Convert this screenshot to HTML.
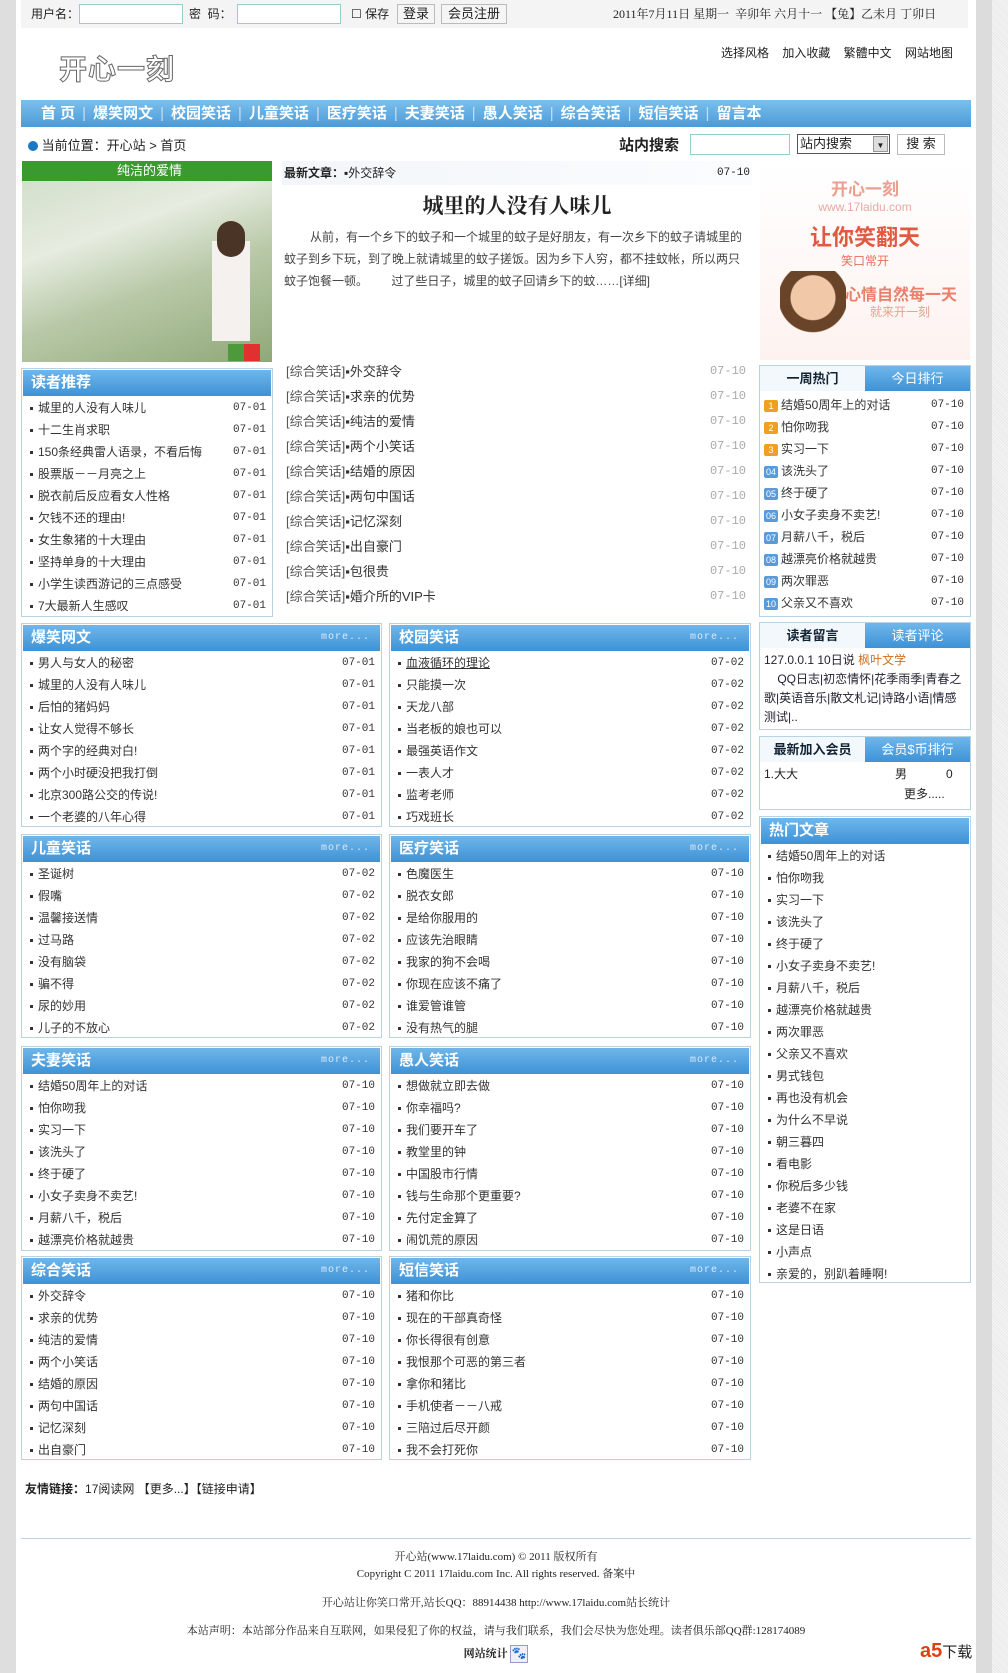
<!DOCTYPE html>
<html><head><meta charset="utf-8">
<style>
*{margin:0;padding:0;box-sizing:border-box}
body{width:1008px;height:1673px;position:relative;background:#fff;font-family:"Liberation Sans","Noto Sans CJK SC","WenQuanYi Zen Hei",sans-serif;font-size:12px;color:#222;overflow:hidden}
.a{position:absolute}
.lg{left:0;top:0;width:16px;height:1673px;background:#dedede}
.rg{left:976px;top:0;width:16px;height:1673px;background:#dcdcdc}
.sb{left:992px;top:0;width:16px;height:1673px;background:repeating-linear-gradient(45deg,#e8e8e8 0 1px,#f6f6f6 1px 2px)}
.top{left:21px;top:0;width:947px;height:28px;background:#f4f4f4;font-size:12px;line-height:28px}
input.t{position:absolute;height:20px;border:1px solid #9cc;background:#fff}
.btn{position:absolute;height:20px;border:1px solid #bbb;background:#f5f5f5;font-size:13px;line-height:18px;text-align:center}
.nav{left:21px;top:100px;width:950px;height:27px;background:linear-gradient(#7cc0ec,#4a9ad8);color:#fff;font-weight:bold;font-size:15px;line-height:27px;padding-left:20px;white-space:nowrap}
.nav span{color:#cde;font-weight:normal;margin:0 7px}
.box{position:absolute;border:1px solid #b9d4e0;background:#fff}
.hd{height:26px;margin:1px;background:linear-gradient(#70b6ea,#3d92d6);color:#fff;font-weight:bold;font-size:15px;line-height:26px;padding-left:8px;position:relative}
.hd i{position:absolute;right:10px;top:0;font-style:normal;font-weight:normal;font-size:10px;color:#dbeaf6;font-family:"Liberation Mono",monospace;letter-spacing:1px}
ul{list-style:none}
li{height:22px;line-height:22px;position:relative;padding-left:8px;white-space:nowrap;color:#333}
li b{font-weight:normal;position:absolute;right:6px;top:0;font-family:"Liberation Mono",monospace;font-size:11px;color:#333}
li:before{content:"";display:inline-block;width:3px;height:3px;background:#333;margin-right:5px;vertical-align:middle}
.tabs{height:25px;display:flex;font-size:13px;line-height:25px;text-align:center}
.tabs div{flex:1}
.tabs .on{background:#f3f8fc;font-weight:bold;color:#123}
.tabs .off{background:linear-gradient(#70b6ea,#3d92d6);color:#fff}
.ml li{height:25px;line-height:25px;font-size:13px;padding-left:4px}
.ml li:before{display:none}
.ml li b{color:#aaa;font-size:12px}
.hot li{padding-left:4px}
.hot li:before{display:none}
.hot em{display:inline-block;width:14px;height:12px;font-size:9px;line-height:12px;text-align:center;color:#fff;font-style:normal;margin-right:3px;vertical-align:middle;border-radius:2px}
.f{left:16px;width:960px;text-align:center;font-family:"Liberation Serif","Noto Serif CJK SC",serif;font-size:11px}
</style></head><body>
<div class="a lg"></div><div class="a rg"></div><div class="a sb"></div>
<div class="a top">
 <span class="a" style="left:10px">用户名：</span><input class="t" style="left:58px;top:4px;width:104px">
 <span class="a" style="left:168px">密 &nbsp;码：</span><input class="t" style="left:216px;top:4px;width:104px">
 <span class="a" style="left:330px">☐ 保存</span>
 <div class="btn" style="left:376px;top:4px;width:38px">登录</div>
 <div class="btn" style="left:420px;top:4px;width:66px">会员注册</div>
 <span class="a" style="left:592px;font-family:'Liberation Serif','Noto Serif CJK SC',serif">2011年7月11日 星期一 &nbsp;辛卯年 六月十一 【兔】乙未月 丁卯日</span>
</div>
<div class="a" style="left:59px;top:48px;font-size:28px;color:#fff;-webkit-text-stroke:1px #666;letter-spacing:1px;font-weight:bold">开心一刻</div>
<div class="a" style="left:721px;top:44px;font-size:12px;word-spacing:10px">选择风格 加入收藏 繁體中文 网站地图</div>
<div class="a nav">首 页<span>|</span>爆笑网文<span>|</span>校园笑话<span>|</span>儿童笑话<span>|</span>医疗笑话<span>|</span>夫妻笑话<span>|</span>愚人笑话<span>|</span>综合笑话<span>|</span>短信笑话<span>|</span>留言本</div>
<div class="a" style="left:28px;top:135px;font-size:13px"><span style="display:inline-block;width:10px;height:10px;border-radius:5px;background:#1a78c8;vertical-align:-1px"></span> 当前位置：开心站 &gt; 首页</div>
<div class="a" style="left:619px;top:134px;font-size:15px;font-weight:bold">站内搜索</div>
<input class="t" style="left:690px;top:134px;width:100px;height:21px">
<div class="a" style="left:797px;top:134px;width:93px;height:20px;border:1px solid #555;font-size:13px;line-height:18px;padding-left:2px;background:#fff">站内搜索<span style="position:absolute;right:1px;top:1px;width:15px;height:16px;background:#ddd;border:1px solid #999;font-size:8px;text-align:center">▼</span></div>
<div class="btn" style="left:897px;top:134px;width:48px;height:21px;background:#fff">搜 索</div>

<div class="a" style="left:22px;top:161px;width:250px;height:201px;background:linear-gradient(160deg,#cfdcc6 0%,#e6ece0 35%,#b9c9a8 60%,#8fa878 100%)">
 <div style="height:20px;background:#3a9a30;color:#fff;font-size:13px;line-height:20px;padding-left:95px">纯洁的爱情</div>
 <div class="a" style="left:190px;top:80px;width:38px;height:100px;background:#f4f1ee"></div>
 <div class="a" style="left:195px;top:60px;width:28px;height:36px;border-radius:14px;background:#4a3426"></div>
 <div class="a" style="left:206px;top:183px;width:16px;height:17px;background:#4c9a3c"></div>
 <div class="a" style="left:222px;top:183px;width:16px;height:17px;background:#e23030"></div>
</div>
<div class="box" style="left:21px;top:368px;width:252px;height:249px">
 <div class="hd">读者推荐</div>
 <ul style="padding-top:0"><li>城里的人没有人味儿<b>07-01</b></li><li>十二生肖求职<b>07-01</b></li><li>150条经典雷人语录，不看后悔<b>07-01</b></li><li>股票版－－月亮之上<b>07-01</b></li><li>脱衣前后反应看女人性格<b>07-01</b></li><li>欠钱不还的理由!<b>07-01</b></li><li>女生象猪的十大理由<b>07-01</b></li><li>坚持单身的十大理由<b>07-01</b></li><li>小学生读西游记的三点感受<b>07-01</b></li><li>7大最新人生感叹<b>07-01</b></li></ul>
</div>

<div class="a" style="left:282px;top:161px;width:470px;height:24px;background:linear-gradient(90deg,#f2f6fa,#fbfcfe);line-height:24px;padding-left:2px"><b>最新文章：</b>▪外交辞令<span class="a" style="right:2px;font-family:'Liberation Mono',monospace;font-size:11px">07-10</span></div>
<div class="a" style="left:282px;top:190px;width:470px;text-align:center;font-size:21px;font-weight:bold;font-family:'Liberation Serif','Noto Serif CJK SC',serif">城里的人没有人味儿</div>
<div class="a" style="left:284px;top:226px;width:466px;line-height:22px;color:#444;text-indent:26px">从前，有一个乡下的蚊子和一个城里的蚊子是好朋友，有一次乡下的蚊子请城里的蚊子到乡下玩，到了晚上就请城里的蚊子搓饭。因为乡下人穷，都不挂蚊帐，所以两只蚊子饱餐一顿。 &nbsp; &nbsp; &nbsp; 过了些日子，城里的蚊子回请乡下的蚊……[详细]</div>
<ul class="a ml" style="left:282px;top:359px;width:470px">
<li><span style="color:#555">[综合笑话]</span>▪外交辞令<b>07-10</b></li><li><span style="color:#555">[综合笑话]</span>▪求亲的优势<b>07-10</b></li><li><span style="color:#555">[综合笑话]</span>▪纯洁的爱情<b>07-10</b></li><li><span style="color:#555">[综合笑话]</span>▪两个小笑话<b>07-10</b></li><li><span style="color:#555">[综合笑话]</span>▪结婚的原因<b>07-10</b></li><li><span style="color:#555">[综合笑话]</span>▪两句中国话<b>07-10</b></li><li><span style="color:#555">[综合笑话]</span>▪记忆深刻<b>07-10</b></li><li><span style="color:#555">[综合笑话]</span>▪出自豪门<b>07-10</b></li><li><span style="color:#555">[综合笑话]</span>▪包很贵<b>07-10</b></li><li><span style="color:#555">[综合笑话]</span>▪婚介所的VIP卡<b>07-10</b></li></ul>

<div class="a" style="left:760px;top:161px;width:210px;height:199px;background:linear-gradient(#fff,#fdf2f0);text-align:center;color:#e56a55">
 <div style="font-size:17px;font-weight:bold;margin-top:14px;color:#eaa090">开心一刻</div>
 <div style="font-size:12px;color:#e9a9a0">www.17laidu.com</div>
 <div style="font-size:22px;font-weight:bold;margin-top:6px;color:#e05a40">让你笑翻天</div>
 <div style="font-size:12px;color:#e57060">笑口常开</div>
 <div class="a" style="left:20px;top:110px;width:66px;height:89px;background:radial-gradient(circle at 50% 30%,#f2c9a8 0 22px,#6a4428 23px 34px,transparent 35px)"></div>
 <div class="a" style="left:85px;top:120px;font-size:16px;font-weight:bold;color:#e8806c">心情自然每一天</div>
 <div class="a" style="left:110px;top:142px;font-size:12px;color:#eaa090">就来开一刻</div>
</div>

<div class="box hot" style="left:759px;top:365px;width:212px;height:252px">
 <div class="tabs"><div class="on">一周热门</div><div class="off">今日排行</div></div>
 <ul style="margin-top:3px">
 <li><em style="background:#f0a020">1</em>结婚50周年上的对话<b>07-10</b></li><li><em style="background:#f0a020">2</em>怕你吻我<b>07-10</b></li><li><em style="background:#f0a020">3</em>实习一下<b>07-10</b></li><li><em style="background:#5b9ad8">04</em>该洗头了<b>07-10</b></li><li><em style="background:#5b9ad8">05</em>终于硬了<b>07-10</b></li><li><em style="background:#5b9ad8">06</em>小女子卖身不卖艺!<b>07-10</b></li><li><em style="background:#5b9ad8">07</em>月薪八千，税后<b>07-10</b></li><li><em style="background:#5b9ad8">08</em>越漂亮价格就越贵<b>07-10</b></li><li><em style="background:#5b9ad8">09</em>两次罪恶<b>07-10</b></li><li><em style="background:#5b9ad8">10</em>父亲又不喜欢<b>07-10</b></li></ul>
</div>
<div class="box" style="left:759px;top:622px;width:212px;height:108px">
 <div class="tabs"><div class="on">读者留言</div><div class="off">读者评论</div></div>
 <div style="padding:3px 4px;line-height:19px;color:#223">127.0.0.1 10日说 <span style="color:#d07020">枫叶文学</span><br>&nbsp; &nbsp; QQ日志|初恋情怀|花季雨季|青春之歌|英语音乐|散文札记|诗路小语|情感测试|..</div>
</div>
<div class="box" style="left:759px;top:736px;width:212px;height:74px">
 <div class="tabs"><div class="on">最新加入会员</div><div class="off">会员$币排行</div></div>
 <div style="padding:2px 4px;line-height:20px;position:relative">1.大大<span class="a" style="left:135px">男</span><span class="a" style="left:186px">0</span><br><span style="margin-left:140px">更多.....</span></div>
</div>
<div class="box" style="left:759px;top:816px;width:212px;height:467px">
 <div class="hd">热门文章</div>
 <ul><li>结婚50周年上的对话</li><li>怕你吻我</li><li>实习一下</li><li>该洗头了</li><li>终于硬了</li><li>小女子卖身不卖艺!</li><li>月薪八千，税后</li><li>越漂亮价格就越贵</li><li>两次罪恶</li><li>父亲又不喜欢</li><li>男式钱包</li><li>再也没有机会</li><li>为什么不早说</li><li>朝三暮四</li><li>看电影</li><li>你税后多少钱</li><li>老婆不在家</li><li>这是日语</li><li>小声点</li><li>亲爱的，别趴着睡啊!</li></ul>
</div>

<div class="box" style="left:21px;top:623px;width:361px;height:204px"><div class="hd">爆笑网文<i>more...</i></div><ul><li>男人与女人的秘密<b>07-01</b></li><li>城里的人没有人味儿<b>07-01</b></li><li>后怕的猪妈妈<b>07-01</b></li><li>让女人觉得不够长<b>07-01</b></li><li>两个字的经典对白!<b>07-01</b></li><li>两个小时硬没把我打倒<b>07-01</b></li><li>北京300路公交的传说!<b>07-01</b></li><li>一个老婆的八年心得<b>07-01</b></li></ul></div>
<div class="box" style="left:389px;top:623px;width:362px;height:204px"><div class="hd">校园笑话<i>more...</i></div><ul><li><u>血液循环的理论</u><b>07-02</b></li><li>只能摸一次<b>07-02</b></li><li>天龙八部<b>07-02</b></li><li>当老板的娘也可以<b>07-02</b></li><li>最强英语作文<b>07-02</b></li><li>一表人才<b>07-02</b></li><li>监考老师<b>07-02</b></li><li>巧戏班长<b>07-02</b></li></ul></div>
<div class="box" style="left:21px;top:834px;width:361px;height:204px"><div class="hd">儿童笑话<i>more...</i></div><ul><li>圣诞树<b>07-02</b></li><li>假嘴<b>07-02</b></li><li>温馨接送情<b>07-02</b></li><li>过马路<b>07-02</b></li><li>没有脑袋<b>07-02</b></li><li>骗不得<b>07-02</b></li><li>尿的妙用<b>07-02</b></li><li>儿子的不放心<b>07-02</b></li></ul></div>
<div class="box" style="left:389px;top:834px;width:362px;height:204px"><div class="hd">医疗笑话<i>more...</i></div><ul><li>色魔医生<b>07-10</b></li><li>脱衣女郎<b>07-10</b></li><li>是给你服用的<b>07-10</b></li><li>应该先治眼睛<b>07-10</b></li><li>我家的狗不会喝<b>07-10</b></li><li>你现在应该不痛了<b>07-10</b></li><li>谁爱管谁管<b>07-10</b></li><li>没有热气的腿<b>07-10</b></li></ul></div>
<div class="box" style="left:21px;top:1046px;width:361px;height:205px"><div class="hd">夫妻笑话<i>more...</i></div><ul><li>结婚50周年上的对话<b>07-10</b></li><li>怕你吻我<b>07-10</b></li><li>实习一下<b>07-10</b></li><li>该洗头了<b>07-10</b></li><li>终于硬了<b>07-10</b></li><li>小女子卖身不卖艺!<b>07-10</b></li><li>月薪八千，税后<b>07-10</b></li><li>越漂亮价格就越贵<b>07-10</b></li></ul></div>
<div class="box" style="left:389px;top:1046px;width:362px;height:205px"><div class="hd">愚人笑话<i>more...</i></div><ul><li>想做就立即去做<b>07-10</b></li><li>你幸福吗?<b>07-10</b></li><li>我们要开车了<b>07-10</b></li><li>教堂里的钟<b>07-10</b></li><li>中国股市行情<b>07-10</b></li><li>钱与生命那个更重要?<b>07-10</b></li><li>先付定金算了<b>07-10</b></li><li>闹饥荒的原因<b>07-10</b></li></ul></div>
<div class="box" style="left:21px;top:1256px;width:361px;height:204px"><div class="hd">综合笑话<i>more...</i></div><ul><li>外交辞令<b>07-10</b></li><li>求亲的优势<b>07-10</b></li><li>纯洁的爱情<b>07-10</b></li><li>两个小笑话<b>07-10</b></li><li>结婚的原因<b>07-10</b></li><li>两句中国话<b>07-10</b></li><li>记忆深刻<b>07-10</b></li><li>出自豪门<b>07-10</b></li></ul></div>
<div class="box" style="left:389px;top:1256px;width:362px;height:204px"><div class="hd">短信笑话<i>more...</i></div><ul><li>猪和你比<b>07-10</b></li><li>现在的干部真奇怪<b>07-10</b></li><li>你长得很有创意<b>07-10</b></li><li>我恨那个可恶的第三者<b>07-10</b></li><li>拿你和猪比<b>07-10</b></li><li>手机使者－－八戒<b>07-10</b></li><li>三陪过后尽开颜<b>07-10</b></li><li>我不会打死你<b>07-10</b></li></ul></div>

<div class="a" style="left:25px;top:1480px;font-size:12px"><b>友情链接：</b>17阅读网 【更多...】【链接申请】</div>
<div class="a" style="left:21px;top:1538px;width:950px;height:1px;background:#b9d4e0"></div>
<div class="a f" style="top:1548px">开心站(www.17laidu.com) © 2011 版权所有</div>
<div class="a f" style="top:1565px">Copyright C 2011 17laidu.com Inc. All rights reserved. 备案中</div>
<div class="a f" style="top:1594px">开心站让你笑口常开,站长QQ：88914438 http://www.17laidu.com站长统计</div>
<div class="a f" style="top:1622px">本站声明：本站部分作品来自互联网，如果侵犯了你的权益，请与我们联系，我们会尽快为您处理。读者俱乐部QQ群:128174089</div>
<div class="a f" style="top:1645px;font-weight:bold">网站统计 <span style="display:inline-block;width:18px;height:18px;border:1px solid #99c;background:#eef;color:#2040c0;font-size:12px;vertical-align:middle">🐾</span></div>
<div class="a" style="left:920px;top:1640px;font-size:15px;color:#222"><span style="color:#e04010;font-weight:bold;font-size:20px">a5</span>下载</div>
</body></html>
